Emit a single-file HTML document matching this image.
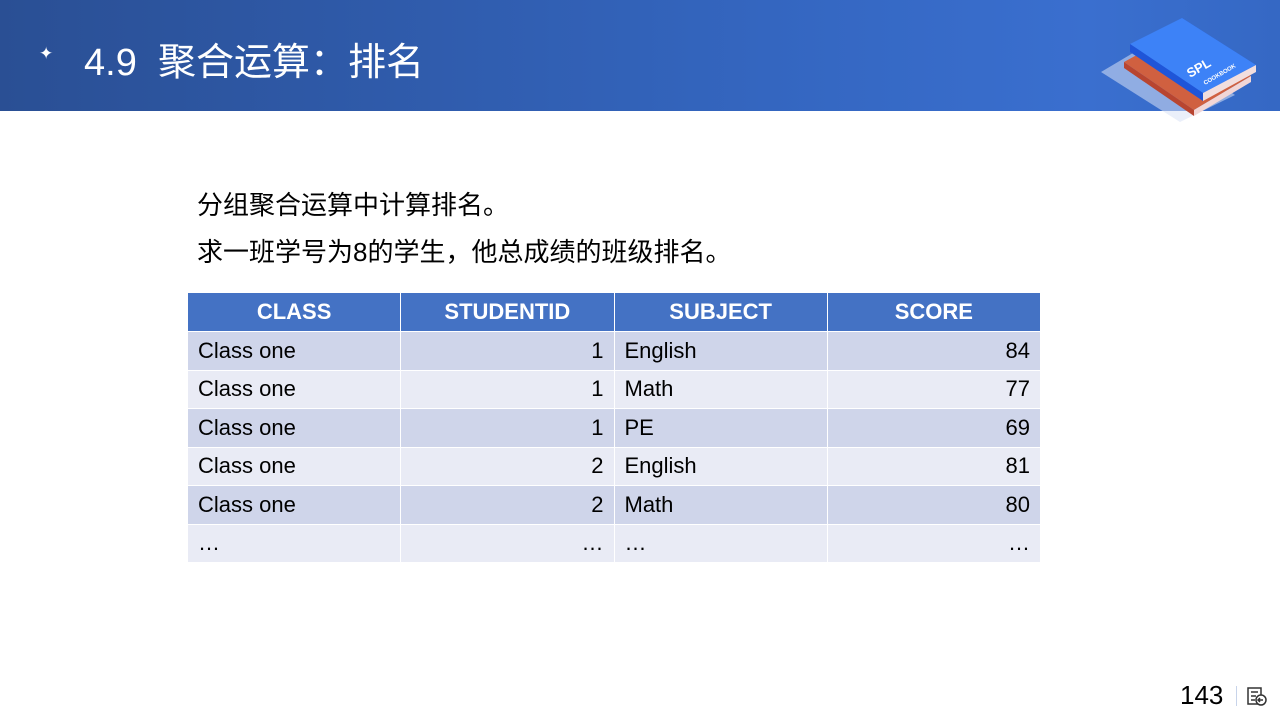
<!DOCTYPE html>
<html><head><meta charset="utf-8"><style>
body{margin:0;width:1280px;height:720px;position:relative;background:#fff;font-family:"Liberation Sans","Noto Sans CJK SC",sans-serif;overflow:hidden}
.hdr{position:absolute;left:0;top:0;width:1280px;height:111px;background:linear-gradient(90deg,#2a4f94 0%,#3466c0 60%,#3a6fcf 85%,#3568c4 100%)}
.title{position:absolute;left:84px;top:31px;color:#fff;font-size:38px}
.star{position:absolute;left:39px;top:44px;color:#fff;font-size:17px}
.txt{position:absolute;left:197px;font-size:26px;color:#000}
table{position:absolute;left:187px;top:292px;border-collapse:collapse;font-size:22px;table-layout:fixed;width:854px}
td,th{height:38.5px;padding:0 10px;box-sizing:border-box;border:1px solid #fff}
th{background:#4472c4;color:#fff;font-weight:bold;text-align:center;height:39px}
tr.o td{background:#cfd5ea}tr.e td{background:#e9ebf5}
.r{text-align:right}
.pg{position:absolute;left:1180px;top:680px;font-size:26px;color:#000}
</style></head><body>
<div class="hdr"></div>
<div class="star">✦</div>
<div class="title">4.9&nbsp; 聚合运算：排名</div>
<svg style="position:absolute;left:1095px;top:10px" width="170" height="115">
<polygon points="6,62 60,30 140,85 85,112" fill="#d9e2f6" opacity=".55"/>
<polygon points="29,52 87,20 156,66 99,100" fill="#d06040"/>
<polygon points="29,52 29,58 99,106 99,100" fill="#b84530"/>
<polygon points="99,100 156,66 156,72 99,106" fill="#f2d6d6"/>
<polygon points="35,40 87,8 161,55 108,87" fill="#2860e0"/>
<polygon points="35,34 87,8 161,55 108,83" fill="#3d82f7"/>
<polygon points="35,34 35,42 108,91 108,83" fill="#1f55d8"/>
<polygon points="108,83 161,55 161,62 108,91" fill="#f2dede"/>
<text x="95" y="68" fill="#fff" font-size="13" font-weight="bold" transform="rotate(-30 95 68)" font-family="Liberation Sans">SPL</text>
<text x="110" y="75" fill="#fff" font-size="6" font-weight="bold" transform="rotate(-30 110 75)" font-family="Liberation Sans">COOKBOOK</text>
</svg>
<div class="txt" style="top:185px">分组聚合运算中计算排名。</div>
<div class="txt" style="top:232px">求一班学号为8的学生，他总成绩的班级排名。</div>
<table>
<tr><th>CLASS</th><th>STUDENTID</th><th>SUBJECT</th><th>SCORE</th></tr>
<tr class="o"><td>Class one</td><td class="r">1</td><td>English</td><td class="r">84</td></tr>
<tr class="e"><td>Class one</td><td class="r">1</td><td>Math</td><td class="r">77</td></tr>
<tr class="o"><td>Class one</td><td class="r">1</td><td>PE</td><td class="r">69</td></tr>
<tr class="e"><td>Class one</td><td class="r">2</td><td>English</td><td class="r">81</td></tr>
<tr class="o"><td>Class one</td><td class="r">2</td><td>Math</td><td class="r">80</td></tr>
<tr class="e"><td>…</td><td class="r">…</td><td>…</td><td class="r">…</td></tr>
</table>
<div class="pg">143</div>
<div style="position:absolute;left:1236px;top:686px;width:1px;height:20px;background:#c8d4ea"></div>
<svg style="position:absolute;left:1246px;top:686px" width="22" height="22" fill="none" stroke="#333" stroke-width="1.5">
<rect x="2" y="2" width="13" height="16"/><line x1="5" y1="6" x2="12" y2="6"/><line x1="5" y1="10" x2="10" y2="10"/><line x1="5" y1="14" x2="9" y2="14"/>
<circle cx="15" cy="14" r="5" fill="#fff"/><path d="M17 14h-5m2-2l-2 2 2 2"/>
</svg>
</body></html>
